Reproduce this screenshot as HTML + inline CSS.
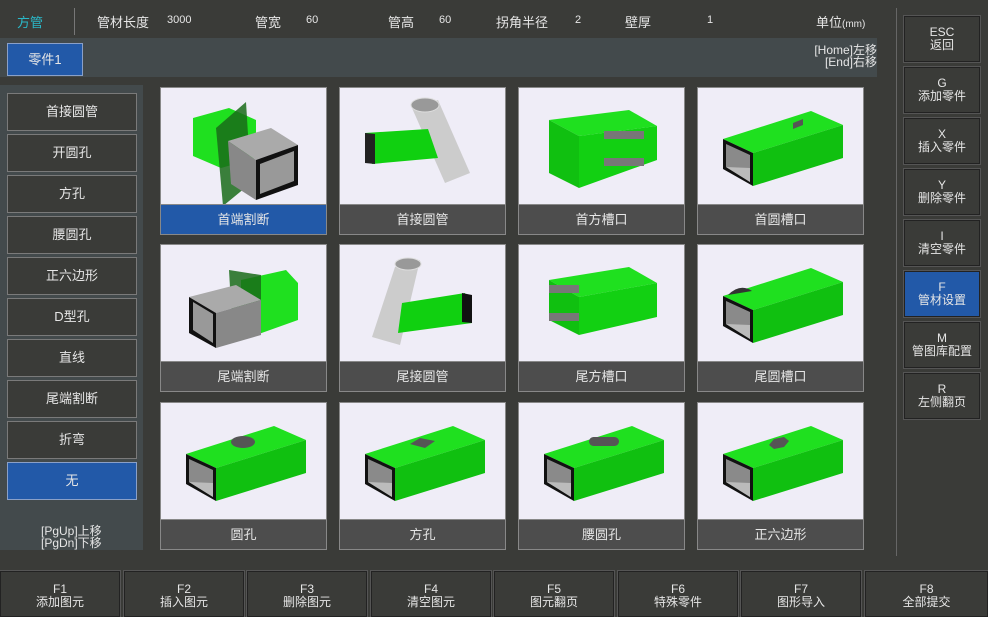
<!DOCTYPE html>
<html><head><meta charset="utf-8"><style>
*{margin:0;padding:0;box-sizing:border-box}
body{width:988px;height:617px;background:#3a3b38;font-family:"Liberation Sans","Noto Sans CJK SC",sans-serif;color:#e6e6e6;position:relative;overflow:hidden;font-size:13px}
.a{position:absolute}
.top span{position:absolute;top:12px;font-size:13px}
.top span.n{top:14px;font-size:11px}
.band{left:0;top:38px;width:877px;height:39px;background:#434a4c}
.lp{left:0;top:85px;width:143px;height:465px;background:#434a4c}
.lb{position:absolute;left:7px;width:130px;height:38px;background:#3a3b38;border:1px solid #7a7a7a;text-align:center;line-height:36px;font-size:13px}
.sel{background:#2259a8;border-color:#8aa0c8}
.rb{position:absolute;left:904px;width:76px;height:46px;background:#3a3b38;border:1px solid #222;outline:1px solid #555;text-align:center;font-size:12px;line-height:13px;padding-top:9px}
.bb{position:absolute;top:571px;width:120px;height:46px;background:#3a3b38;border:1px solid #222;outline:1px solid #555;text-align:center;font-size:12px;line-height:13px;padding-top:11px}
.card{position:absolute;width:167px;height:148px;background:#efedf7;border:1px solid #888}
.card svg{position:absolute;left:0;top:0}
.lab{position:absolute;left:0;bottom:0;width:165px;height:30px;background:#4d4d4d;border-top:1px solid #888;text-align:center;line-height:30px;font-size:13px}
.lab.s{background:#2259a8}
</style></head><body>
<svg width="0" height="0" style="position:absolute"><defs>
<g id="box">
<polygon points="25,51 113,23 145,37 55,65" fill="#1fe01f"/>
<polygon points="55,65 145,37 145,70 55,98" fill="#10c010"/>
<polygon points="25,51 55,65 55,98 25,81" fill="#111"/>
<polygon points="28,56 52,67 52,94 28,79" fill="#8a8a8a"/>
<polygon points="28,79 52,94 52,80" fill="#bbb"/>
</g></defs></svg>
<div class="a top" style="left:0;top:0;width:988px;height:38px">
<span style="left:17px;color:#2ab8c8">方管</span>
<div class="a" style="left:74px;top:8px;width:1px;height:27px;background:#777"></div>
<span style="left:97px">管材长度</span><span class="n" style="left:167px">3000</span>
<span style="left:255px">管宽</span><span class="n" style="left:306px">60</span>
<span style="left:388px">管高</span><span class="n" style="left:439px">60</span>
<span style="left:496px">拐角半径</span><span class="n" style="left:575px">2</span>
<span style="left:625px">壁厚</span><span class="n" style="left:707px">1</span>
<span style="left:816px">单位<small style="font-size:10px">(mm)</small></span>
</div>
<div class="a" style="left:896px;top:8px;width:1px;height:548px;background:#666"></div>
<div class="a band"></div>
<div class="a" style="left:7px;top:43px;width:76px;height:33px;background:#2259a8;border:1px solid #8aa0c8;text-align:center;line-height:31px">零件1</div>
<div class="a" style="left:800px;top:44px;width:77px;text-align:right;font-size:12px;line-height:12px">[Home]左移<br>[End]右移</div>
<div class="a lp"></div>
<div class="lb" style="top:93px">首接圆管</div>
<div class="lb" style="top:134px">开圆孔</div>
<div class="lb" style="top:175px">方孔</div>
<div class="lb" style="top:216px">腰圆孔</div>
<div class="lb" style="top:257px">正六边形</div>
<div class="lb" style="top:298px">D型孔</div>
<div class="lb" style="top:339px">直线</div>
<div class="lb" style="top:380px">尾端割断</div>
<div class="lb" style="top:421px">折弯</div>
<div class="lb sel" style="top:462px">无</div>
<div class="a" style="left:41px;top:525px;font-size:12px;line-height:12px">[PgUp]上移<br>[PgDn]下移</div>

<div class="card" style="left:160px;top:87px"><svg width="165" height="118"><polygon points="32,30 68,20 95,32 95,70 60,80 32,68" fill="#1fe01f"/><polygon points="55,40 85,14 90,95 62,118" fill="#1a6b1a" opacity=".85"/><polygon points="67,53 110,40 137,57 95,72" fill="#aaa"/><polygon points="67,53 95,72 95,112 70,96" fill="#888"/><polygon points="95,72 137,57 137,97 95,112" fill="#111"/><polygon points="99,76 133,63 133,93 99,106" fill="#999"/></svg><div class="lab s">首端割断</div></div>
<div class="card" style="left:339px;top:87px"><svg width="165" height="118"><polygon points="72,20 98,12 130,85 105,95" fill="#ccc"/><ellipse cx="85" cy="17" rx="14" ry="7" fill="#999" stroke="#ddd"/><polygon points="25,45 88,41 98,70 32,76" fill="#10d010"/><polygon points="25,45 35,46 35,76 25,75" fill="#222"/></svg><div class="lab">首接圆管</div></div>
<div class="card" style="left:518px;top:87px"><svg width="165" height="118"><polygon points="30,32 110,22 138,38 60,48" fill="#1fe01f"/><polygon points="30,32 60,48 60,100 30,85" fill="#10c010"/><polygon points="60,48 138,38 138,72 60,100" fill="#12d012"/><rect x="85" y="43" width="40" height="8" fill="#777"/><rect x="85" y="70" width="40" height="8" fill="#777"/></svg><div class="lab">首方槽口</div></div>
<div class="card" style="left:697px;top:87px"><svg width="165" height="118"><use href="#box"/><path d="M95 35 l10 -4 l0 6 l-10 4z" fill="#555"/></svg><div class="lab">首圆槽口</div></div>

<div class="card" style="left:160px;top:244px"><svg width="165" height="118"><polygon points="80,35 125,25 137,38 137,75 95,90 80,78" fill="#1fe01f"/><polygon points="68,25 100,30 100,80 72,95" fill="#1a6b1a" opacity=".85"/><polygon points="28,52 75,40 100,55 55,68" fill="#aaa"/><polygon points="28,52 55,68 55,103 28,88" fill="#111"/><polygon points="32,57 52,69 52,98 32,85" fill="#999"/><polygon points="55,68 100,55 100,90 55,103" fill="#888"/></svg><div class="lab">尾端割断</div></div>
<div class="card" style="left:339px;top:244px"><svg width="165" height="118"><polygon points="55,22 80,15 60,100 32,92" fill="#ccc"/><ellipse cx="68" cy="19" rx="13" ry="6" fill="#999" stroke="#ddd"/><polygon points="62,58 125,48 132,78 58,88" fill="#10d010"/><polygon points="122,48 132,50 132,78 122,77" fill="#111"/></svg><div class="lab">尾接圆管</div></div>
<div class="card" style="left:518px;top:244px"><svg width="165" height="118"><polygon points="30,35 110,22 138,38 60,52" fill="#1fe01f"/><polygon points="60,52 138,38 138,72 60,90" fill="#12d012"/><polygon points="30,35 60,52 60,90 30,75" fill="#10c010"/><rect x="30" y="40" width="30" height="8" fill="#777"/><rect x="30" y="68" width="30" height="8" fill="#777"/></svg><div class="lab">尾方槽口</div></div>
<div class="card" style="left:697px;top:244px"><svg width="165" height="118"><use href="#box"/><path d="M30 50 q12 -12 24 -4 z" fill="#333"/></svg><div class="lab">尾圆槽口</div></div>

<div class="card" style="left:160px;top:402px"><svg width="165" height="118"><use href="#box"/><ellipse cx="82" cy="39" rx="12" ry="6" fill="#555"/></svg><div class="lab">圆孔</div></div>
<div class="card" style="left:339px;top:402px"><svg width="165" height="118"><use href="#box"/><polygon points="70,41 80,35 95,38 85,45" fill="#555"/></svg><div class="lab">方孔</div></div>
<div class="card" style="left:518px;top:402px"><svg width="165" height="118"><use href="#box"/><rect x="70" y="34" width="30" height="9" rx="4.5" fill="#555"/></svg><div class="lab">腰圆孔</div></div>
<div class="card" style="left:697px;top:402px"><svg width="165" height="118"><use href="#box"/><polygon points="71,42 76,36 86,34 91,38 86,44 76,46" fill="#555"/></svg><div class="lab">正六边形</div></div>

<div class="rb" style="top:16px">ESC<br>返回</div>
<div class="rb" style="top:67px">G<br>添加零件</div>
<div class="rb" style="top:118px">X<br>插入零件</div>
<div class="rb" style="top:169px">Y<br>删除零件</div>
<div class="rb" style="top:220px">I<br>清空零件</div>
<div class="rb" style="top:271px;background:#2259a8">F<br>管材设置</div>
<div class="rb" style="top:322px">M<br>管图库配置</div>
<div class="rb" style="top:373px">R<br>左侧翻页</div>

<div class="bb" style="left:0">F1<br>添加图元</div>
<div class="bb" style="left:124px">F2<br>插入图元</div>
<div class="bb" style="left:247px">F3<br>删除图元</div>
<div class="bb" style="left:371px">F4<br>清空图元</div>
<div class="bb" style="left:494px">F5<br>图元翻页</div>
<div class="bb" style="left:618px">F6<br>特殊零件</div>
<div class="bb" style="left:741px">F7<br>图形导入</div>
<div class="bb" style="left:865px;width:123px">F8<br>全部提交</div>
</body></html>
